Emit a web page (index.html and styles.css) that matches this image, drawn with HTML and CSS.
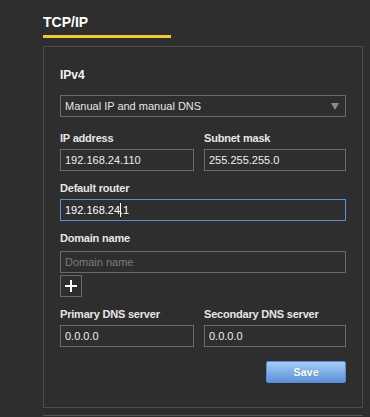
FILE: index.html
```html
<!DOCTYPE html>
<html lang="en">
<head>
    <meta charset="UTF-8">
    <meta name="viewport" content="width=device-width, initial-scale=1.0">
    <title>TCP/IP</title>
    <link rel="stylesheet" href="styles.css">
</head>
<body>
<div class="page">
    <div class="tab">TCP/IP</div>

    <div class="panel">
        <h2 class="section-title">IPv4</h2>

        <div class="select">
            <span>Manual IP and manual DNS</span>
            <span class="select-arrow"></span>
        </div>

        <div class="row">
            <div class="field">
                <label class="label">IP address</label>
                <input class="input" type="text" value="192.168.24.110">
            </div>
            <div class="field">
                <label class="label">Subnet mask</label>
                <input class="input" type="text" value="255.255.255.0">
            </div>
        </div>

        <div class="field">
            <label class="label">Default router</label>
            <div class="input focused">192.168.24<span class="caret"></span>.1</div>
        </div>

        <div class="field domain">
            <label class="label">Domain name</label>
            <input class="input" type="text" placeholder="Domain name">
            <button type="button" class="add-btn">
                <svg width="12" height="12" viewBox="0 0 12 12">
                    <path d="M6 0V12M0 6H12" stroke="#fff" stroke-width="2"/>
                </svg>
            </button>
        </div>

        <div class="row">
            <div class="field">
                <label class="label">Primary DNS server</label>
                <input class="input" type="text" value="0.0.0.0">
            </div>
            <div class="field">
                <label class="label">Secondary DNS server</label>
                <input class="input" type="text" value="0.0.0.0">
            </div>
        </div>

        <div class="actions">
            <button type="button" class="btn">Save</button>
        </div>
    </div>

    <div class="panel-next"></div>
</div>
</body>
</html>
```

FILE: styles.css
```css
* {
    margin: 0;
    padding: 0;
    box-sizing: border-box;
}

body {
    font-family: "Liberation Sans", Arial, sans-serif;
    background: #2e2e2e;
    color: #e6e6e6;
    overflow: hidden;
}

.page {
    padding-left: 43px;
    width: 363px;
}

.tab {
    width: 128px;
    padding-top: 14px;
    padding-bottom: 5px;
    font-size: 14px;
    line-height: 16px;
    font-weight: 700;
    color: #ffffff;
    border-bottom: 3px solid #ecca35;
}

.panel {
    margin-top: 8px;
    border: 1px solid #4c4c4c;
    padding: 21px 16px 24px;
}

.section-title {
    font-size: 12px;
    line-height: 14px;
    font-weight: 700;
    color: #f2f2f2;
    margin-bottom: 13px;
}

.select {
    height: 22px;
    border: 1px solid #6a6a6a;
    display: flex;
    align-items: center;
    justify-content: space-between;
    padding: 0 6px 0 4px;
    font-size: 11px;
    color: #e6e6e6;
}

.select-arrow {
    width: 0;
    height: 0;
    border-left: 4.5px solid transparent;
    border-right: 4.5px solid transparent;
    border-top: 7px solid #8a8a8a;
}

.row {
    display: grid;
    grid-template-columns: 134px 1fr;
    column-gap: 10px;
}

.select + .row {
    margin-top: 14px;
}

.field {
    display: flex;
    flex-direction: column;
}

.panel > .row + .field,
.panel > .field + .field,
.panel > .field + .row {
    margin-top: 10px;
}

.label {
    font-size: 11px;
    line-height: 14px;
    font-weight: 700;
    letter-spacing: -0.2px;
    color: #e6e6e6;
    margin-bottom: 4px;
}

.domain .label {
    margin-bottom: 6px;
}

.input {
    height: 22px;
    width: 100%;
    border: 1px solid #6a6a6a;
    background: #2e2e2e;
    color: #eeeeee;
    font-family: inherit;
    font-size: 11px;
    line-height: 20px;
    padding: 0 4px;
    outline: none;
}

.input::placeholder {
    color: #7c7c7c;
}

.input.focused {
    border-color: #5b8fd8;
    color: #ffffff;
}

.caret {
    display: inline-block;
    width: 1px;
    height: 14px;
    margin-right: -1px;
    background: #ffffff;
    vertical-align: -3px;
}

.add-btn {
    margin-top: 2px;
    width: 22px;
    height: 22px;
    border: 1px solid #6a6a6a;
    background: #2e2e2e;
    display: flex;
    align-items: center;
    justify-content: center;
    cursor: pointer;
}

.actions {
    display: flex;
    justify-content: flex-end;
    margin-top: 14px;
}

.btn {
    width: 80px;
    height: 22px;
    border: 1px solid #5a8bd0;
    border-radius: 2px;
    background: linear-gradient(#a3cdf6, #5d91d9);
    color: #ffffff;
    font-family: inherit;
    font-size: 11px;
    font-weight: 700;
    text-shadow: 0 0 1px rgba(40, 80, 140, 0.6);
    cursor: pointer;
}

.panel-next {
    margin-top: 7px;
    height: 10px;
    border-top: 1px solid #555555;
}
```
